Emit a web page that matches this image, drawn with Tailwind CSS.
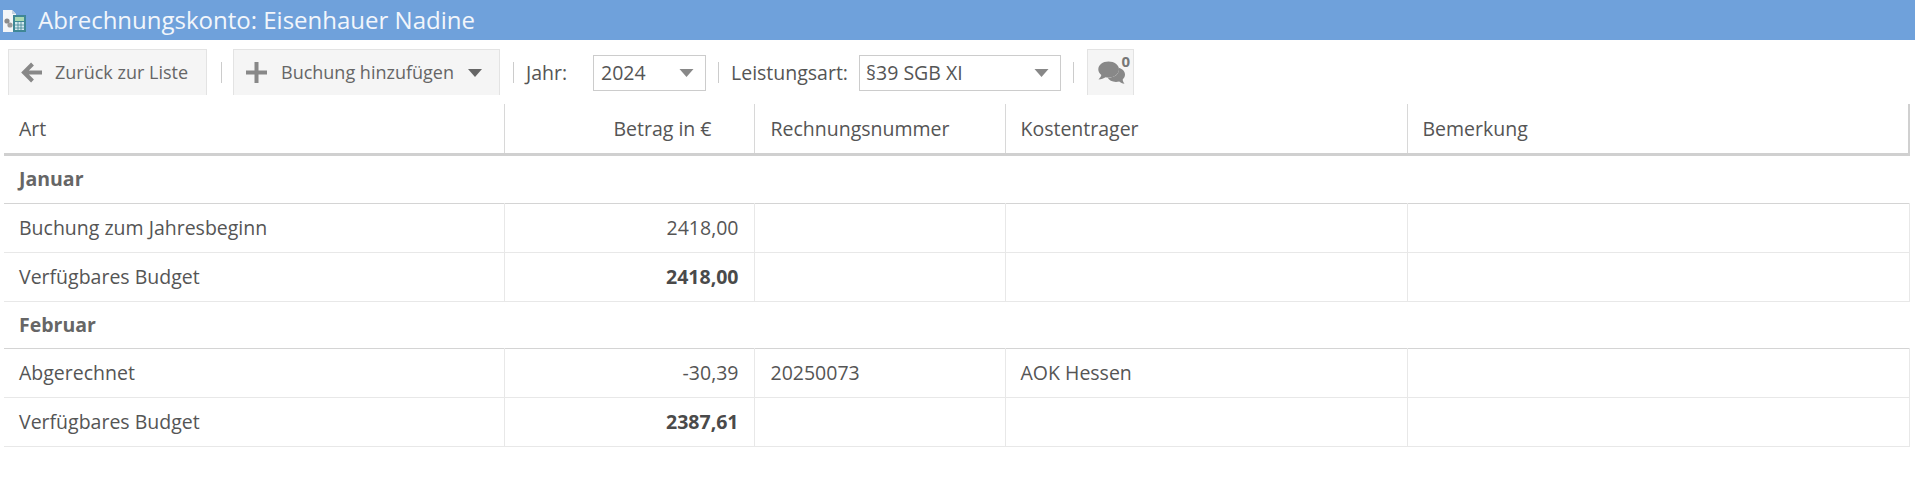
<!DOCTYPE html>
<html lang="de">

<head>
    <meta charset="UTF-8">
    <title>Abrechnungskonto</title>
    <script src="https://cdn.jsdelivr.net/npm/@tailwindcss/browser@4"></script>
</head>

<body class="bg-white font-['Open_Sans',sans-serif] text-[19.5px] text-[#555] overflow-hidden whitespace-nowrap">
    <!-- Title bar -->
    <header class="h-[40px] bg-[#6fa1db] flex items-center text-[#f2f6fb]">
        <svg class="w-[24px] h-[24px] ml-[2px] mt-[2px] shrink-0" viewBox="0 0 24 24">
            <path d="M1 1h9l4 4v18H1z" fill="#f4f6f8" />
            <path d="M10 1l4 4h-4z" fill="#c5d3e0" />
            <circle cx="5" cy="12" r="2.600" fill="#8a8a8a" />
            <circle cx="8" cy="16" r="2.600" fill="#9a9a9a" />
            <rect x="11" y="6" width="13" height="17" fill="#3f8796" />
            <rect x="13" y="8" width="9" height="4" fill="#a9d9b2" />
            <rect x="13" y="13" width="9" height="8" fill="#d5e9f0" />
            <path d="M16 13v8M19 13v8M13 16h9M13 19h9" stroke="#3f8796" stroke-width="0.8" />
        </svg>
        <h1 class="ml-[12px] text-[24px] leading-[40px]">Abrechnungskonto: Eisenhauer Nadine</h1>
    </header>

    <!-- Toolbar -->
    <div class="flex items-center h-[46px] mt-[9px] pl-[8px]">
        <a class="flex items-center shrink-0 h-full w-[199px] pl-[12px] bg-[#f5f5f5] border border-b-0 border-[#e3e3e3] text-[#666]">
            <svg class="w-[21px] h-[21px] shrink-0" viewBox="0 0 21 21" fill="none" stroke="#888" stroke-width="4">
                <path d="M21 10.500H3M11.500 2l-8.500 8.500 8.500 8.500" />
            </svg>
            <span class="ml-[13px] text-[18px]">Zurück zur Liste</span>
        </a>
        <span class="shrink-0 w-px h-[21px] bg-[#ccc] ml-[14px]"></span>
        <a class="flex items-center shrink-0 h-full w-[267px] ml-[11px] pl-[12px] bg-[#f5f5f5] border border-b-0 border-[#e3e3e3] text-[#666]">
            <svg class="w-[21px] h-[21px] shrink-0" viewBox="0 0 21 21" fill="#888">
                <path d="M8.500 0h4v8.500H21v4h-8.500V21h-4v-8.500H0v-4h8.500z" />
            </svg>
            <span class="ml-[14px] text-[18px]">Buchung hinzufügen</span>
            <svg class="w-[14px] h-[8px] ml-[14px] shrink-0" viewBox="0 0 14 8" fill="#666">
                <path d="M0 0h14L7 8z" />
            </svg>
        </a>
        <span class="shrink-0 w-px h-[21px] bg-[#ccc] ml-[13px]"></span>
        <label class="shrink-0 ml-[12px] w-[67px] mt-[2px]">Jahr:</label>
        <div class="flex items-center justify-between shrink-0 w-[113px] h-[36px] mt-[2px] pl-[7px] pr-[11px] border border-[#ccc]">
            <span>2024</span>
            <svg class="w-[15px] h-[8px]" viewBox="0 0 14 8" fill="#888">
                <path d="M0 0h14L7 8z" />
            </svg>
        </div>
        <span class="shrink-0 w-px h-[21px] bg-[#ccc] ml-[12px]"></span>
        <label class="shrink-0 ml-[12px] w-[128px] mt-[2px]">Leistungsart:</label>
        <div class="flex items-center justify-between shrink-0 w-[202px] h-[36px] mt-[2px] pl-[6px] pr-[11px] border border-[#ccc]">
            <span>§39 SGB XI</span>
            <svg class="w-[15px] h-[8px]" viewBox="0 0 14 8" fill="#888">
                <path d="M0 0h14L7 8z" />
            </svg>
        </div>
        <span class="shrink-0 w-px h-[21px] bg-[#ccc] ml-[12px]"></span>
        <a class="relative shrink-0 h-full w-[47px] ml-[13px] bg-[#f5f5f5] border border-b-0 border-[#e3e3e3]">
            <svg class="absolute left-[10px] top-[11px] w-[27px] h-[23px]" viewBox="0 0 27 23" fill="#888">
                <path d="M18 6.500c5 0 9 3 9 7 0 1.900-.9 3.600-2.300 4.900.1 1.600.8 3 1.800 4.400-2.100-.3-3.900-1.100-5.300-2.300-1 .3-2.100.4-3.200.4-3.900 0-7.200-1.700-8.400-4.300 6 .2 12.500-3 11.200-9.800z" />
                <path d="M10.500.5c5.800 0 10.500 3.500 10.500 8s-4.700 8-10.500 8c-1 0-2-.1-3-.3C5.900 17.400 3.200 18.200.5 18.400 2 17 3 15.600 3.300 14 1.500 12.600.3 10.600.3 8.500.3 4 4.700.5 10.500.5z" />
            </svg>
            <span class="absolute right-[3px] top-[2px] text-[15px] font-bold leading-[18px] text-[#777]">0</span>
        </a>
    </div>

    <!-- Table -->
    <table class="table-fixed border-collapse w-[1905px] ml-[4px] mt-[9px]">
        <colgroup>
            <col class="w-[500px]">
            <col class="w-[250px]">
            <col class="w-[251px]">
            <col class="w-[402px]">
            <col class="w-[502px]">
        </colgroup>
        <thead>
            <tr class="h-[50px] border-b-[3px] border-[#d0d0d0] text-left">
                <th class="font-normal px-[15px] border-r border-[#d8d8d8]">Art</th>
                <th class="font-normal pl-[12px] pr-[42px] text-right border-r border-[#d8d8d8]">Betrag in €</th>
                <th class="font-normal px-[16px] border-r border-[#d8d8d8]">Rechnungsnummer</th>
                <th class="font-normal px-[15px] border-r border-[#d8d8d8]">Kostentrager</th>
                <th class="font-normal px-[15px] border-r-2 border-[#d0d0d0]">Bemerkung</th>
            </tr>
        </thead>
        <tbody>
            <tr class="h-[49px] border-b border-[#d4d4d4]">
                <td colspan="5" class="px-[15px] font-bold text-[#666]">Januar</td>
            </tr>
            <tr class="h-[49px] border-b border-[#e8e8e8]">
                <td class="px-[15px] border-r border-[#e8e8e8]">Buchung zum Jahresbeginn</td>
                <td class="px-[15px] text-right border-r border-[#e8e8e8]">2418,00</td>
                <td class="px-[16px] border-r border-[#e8e8e8]"></td>
                <td class="px-[15px] border-r border-[#e8e8e8]"></td>
                <td class="px-[15px] border-r border-[#e8e8e8]"></td>
            </tr>
            <tr class="h-[49px] border-b border-[#e8e8e8]">
                <td class="px-[15px] border-r border-[#e8e8e8]">Verfügbares Budget</td>
                <td class="px-[15px] text-right font-bold text-[#4a4a4a] border-r border-[#e8e8e8]">2418,00</td>
                <td class="px-[16px] border-r border-[#e8e8e8]"></td>
                <td class="px-[15px] border-r border-[#e8e8e8]"></td>
                <td class="px-[15px] border-r border-[#e8e8e8]"></td>
            </tr>
            <tr class="h-[47px] border-b border-[#d4d4d4]">
                <td colspan="5" class="px-[15px] font-bold text-[#666]">Februar</td>
            </tr>
            <tr class="h-[49px] border-b border-[#e8e8e8]">
                <td class="px-[15px] pt-[1px] border-r border-[#e8e8e8]">Abgerechnet</td>
                <td class="px-[15px] pt-[1px] text-right border-r border-[#e8e8e8]">-30,39</td>
                <td class="px-[16px] pt-[1px] border-r border-[#e8e8e8]">20250073</td>
                <td class="px-[15px] pt-[1px] border-r border-[#e8e8e8]">AOK Hessen</td>
                <td class="px-[15px] border-r border-[#e8e8e8]"></td>
            </tr>
            <tr class="h-[49px] border-b border-[#e8e8e8]">
                <td class="px-[15px] pt-[1px] border-r border-[#e8e8e8]">Verfügbares Budget</td>
                <td class="px-[15px] pt-[1px] text-right font-bold text-[#4a4a4a] border-r border-[#e8e8e8]">2387,61</td>
                <td class="px-[16px] border-r border-[#e8e8e8]"></td>
                <td class="px-[15px] border-r border-[#e8e8e8]"></td>
                <td class="px-[15px] border-r border-[#e8e8e8]"></td>
            </tr>
        </tbody>
    </table>
</body>

</html>
